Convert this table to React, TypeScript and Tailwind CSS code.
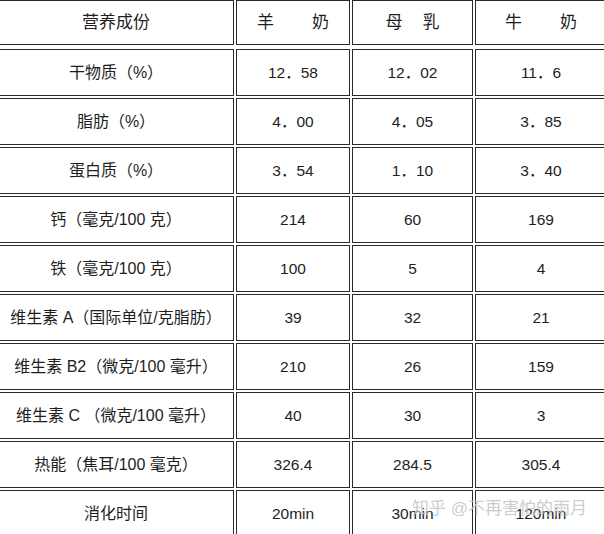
const rows: [string, string, string, string][] = [
  ["干物质（%）", "12．58", "12．02", "11．6"],
  ["脂肪（%）", "4．00", "4．05", "3．85"],
  ["蛋白质（%）", "3．54", "1．10", "3．40"],
  ["钙（毫克/100 克）", "214", "60", "169"],
  ["铁（毫克/100 克）", "100", "5", "4"],
  ["维生素 A（国际单位/克脂肪）", "39", "32", "21"],
  ["维生素 B2（微克/100 毫升）", "210", "26", "159"],
  ["维生素 C （微克/100 毫升）", "40", "30", "3"],
  ["热能（焦耳/100 毫克）", "326.4", "284.5", "305.4"],
  ["消化时间", "20min", "30min", "120min"],
];

const cell = "border border-[#2a2a2a] flex items-center justify-center";

export default function App() {
  return (
    <div
      className="relative w-[604px] h-[534px] overflow-hidden bg-white text-[#1e1e1e]"
      style={{ fontFamily: '"Liberation Sans", "Noto Sans CJK SC", sans-serif' }}
    >
      <div className="-ml-[2px] grid grid-cols-[236px_114px_121px_132px] auto-rows-[47px] gap-[2px]">
        {/* header */}
        <div className={`${cell} h-[45px] text-[17px]`}>营养成份</div>
        <div className={`${cell} h-[45px] text-[17px] gap-[38px]`}>
          <span>羊</span>
          <span>奶</span>
        </div>
        <div className={`${cell} h-[45px] text-[17px] gap-[20px]`}>
          <span>母</span>
          <span>乳</span>
        </div>
        <div className={`${cell} h-[45px] text-[17px] gap-[38px]`}>
          <span>牛</span>
          <span>奶</span>
        </div>

        {rows.map((r) => (
          <>
            <div key={r[0]} className={`${cell} text-[16px]`}>{r[0]}</div>
            <div className={`${cell} text-[15.5px]`}>{r[1]}</div>
            <div className={`${cell} text-[15.5px]`}>{r[2]}</div>
            <div className={`${cell} text-[15.5px]`}>{r[3]}</div>
          </>
        ))}
      </div>

      {/* watermark */}
      <div className="absolute left-[412px] top-[496px] text-[17px] text-[#c8c8c8] opacity-90 whitespace-nowrap">
        知乎 @不再害怕的雨月
      </div>
    </div>
  );
}
